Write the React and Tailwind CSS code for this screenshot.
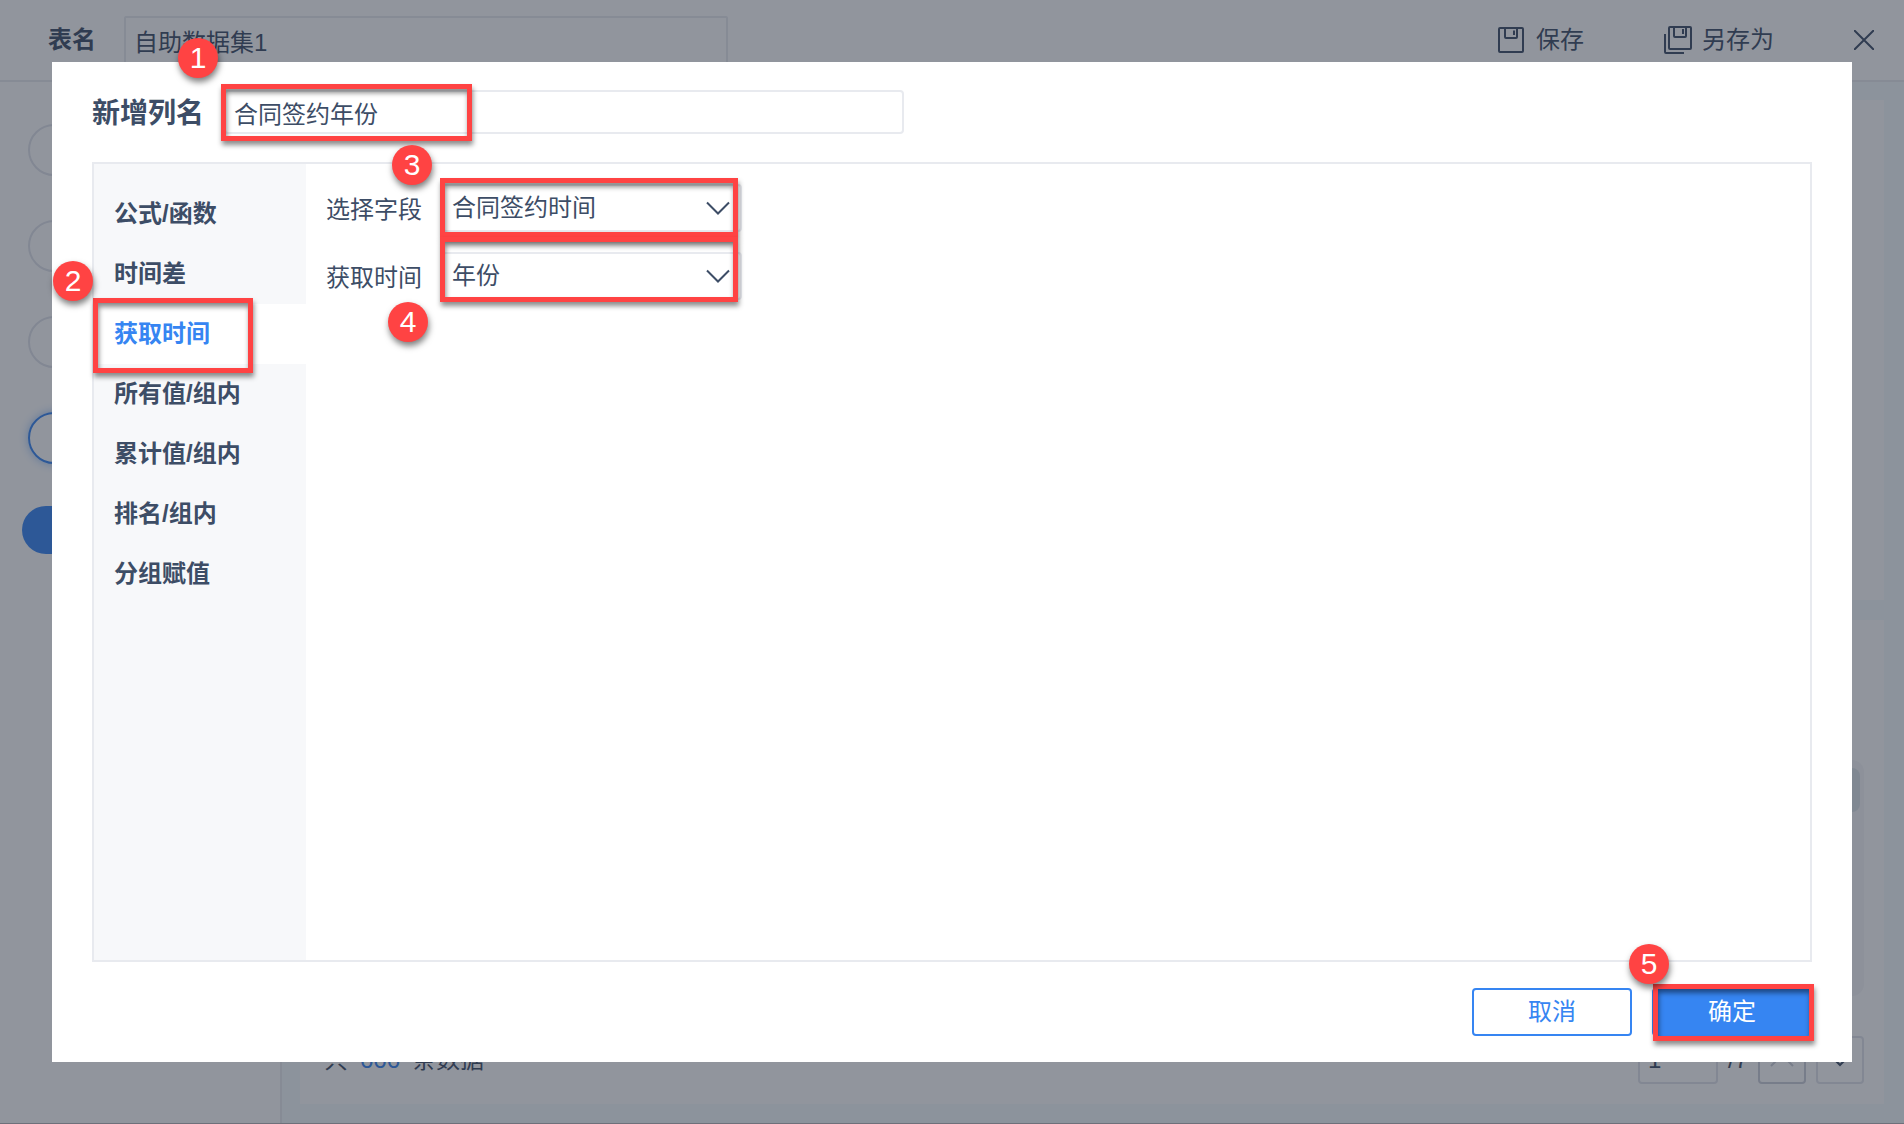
import React from "react";

const navItems = ["公式/函数", "时间差", "获取时间", "所有值/组内", "累计值/组内", "排名/组内", "分组赋值"];

function SaveIcon() {
  return (
    <svg width="26" height="26" viewBox="0 0 26 26" fill="none" stroke="currentColor" strokeWidth="2" aria-hidden="true">
      <rect x="1" y="1" width="24" height="24" rx="1" />
      <path d="M7 1v9q0 1 1 1h10q1 0 1-1V1M16 3.500v4.500" />
    </svg>
  );
}

function SaveAsIcon() {
  return (
    <svg width="28" height="28" viewBox="0 0 28 28" fill="none" stroke="currentColor" strokeWidth="2" aria-hidden="true">
      <rect x="5" y="1" width="22" height="22" rx="1" />
      <path d="M10 1v9q0 1 1 1h10q1 0 1-1V1M19 3v5M1 8v18q0 1 1 1h18" />
    </svg>
  );
}

function Callout({ n, className }) {
  return (
    <span
      className={
        "pointer-events-none absolute z-20 flex size-10 items-center justify-center rounded-full bg-[#ff4343] text-[30px] leading-10 text-white shadow-[1px_4px_6px_rgba(0,0,0,0.5)] " +
        className
      }
    >
      {n}
    </span>
  );
}

function Marker({ className }) {
  return (
    <span
      className={
        "pointer-events-none absolute z-10 border-5 border-[#ff4343] shadow-[1px_4px_5px_rgba(0,0,0,0.45),inset_1px_4px_5px_rgba(0,0,0,0.45)] " +
        className
      }
    />
  );
}

function Field({ id, label, options, children }) {
  return (
    <div className="flex items-center gap-5">
      <label htmlFor={id} className="pt-1">
        {label}
      </label>
      <div className="relative w-[300px]">
        <select
          id={id}
          className="h-12 w-full appearance-none rounded border-2 border-[#e8eaef] bg-white px-2 text-[#3d4d66]"
        >
          {options.map((o) => (
            <option key={o}>{o}</option>
          ))}
        </select>
        <svg
          className="pointer-events-none absolute top-4 right-3"
          width="24"
          height="16"
          viewBox="0 0 24 16"
          fill="none"
          stroke="#3d4d66"
          strokeWidth="2"
          aria-hidden="true"
        >
          <path d="M1 2.500l11 11 11-11" />
        </svg>
        {children}
      </div>
    </div>
  );
}

function Backdrop() {
  return (
    <div className="flex h-full flex-col bg-white">
      <header className="flex h-[82px] shrink-0 items-start border-b-2 border-[#e8eaef] pt-4 pr-[30px] pl-12">
        <label htmlFor="table-name" className="pt-1.5 leading-9 font-bold">
          表名
        </label>
        <input
          id="table-name"
          defaultValue="自助数据集1"
          className="ml-7 h-12 w-[604px] rounded-xs border-2 border-[#e8eaef] bg-white px-2"
        />
        <div className="ml-auto flex h-12 items-center">
          <button type="button" className="flex items-center gap-3">
            <SaveIcon />
            <span>保存</span>
          </button>
          <button type="button" className="ml-20 flex items-center gap-2.5">
            <SaveAsIcon />
            <span>另存为</span>
          </button>
          <button type="button" aria-label="关闭" className="ml-20">
            <svg width="20" height="20" viewBox="0 0 20 20" fill="none" stroke="currentColor" strokeWidth="2" aria-hidden="true">
              <path d="M0 0l20 20M20 0L0 20" />
            </svg>
          </button>
        </div>
      </header>
      <div className="flex min-h-0 flex-1">
        <aside className="flex w-[282px] shrink-0 flex-col border-r-2 border-[#e8eaef] px-[22px] pt-[42px]">
          <div className="flex flex-col gap-11 px-1.5">
            <div className="h-[52px] rounded-full border-2 border-[#e0e3ea]" />
            <div className="h-[52px] rounded-full border-2 border-[#e0e3ea]" />
            <div className="h-[52px] rounded-full border-2 border-[#e0e3ea]" />
            <div className="h-[52px] rounded-full border-2 border-[#3685f2] shadow-[0_0_10px_#3685f280]" />
          </div>
          <div className="mt-[42px] h-12 rounded-full bg-[#3685f2]" />
        </aside>
        <main className="flex flex-1 flex-col gap-5 bg-[#f5fbfd] pt-[18px] pr-5 pb-[19px] pl-[18px]">
          <section className="basis-[500px] bg-white" />
          <section className="flex flex-1 flex-col justify-end bg-white pr-5 pb-5 pl-6">
            <div className="mb-10 flex h-[236px] justify-end rounded-xl bg-[#f6f6f8] px-1 py-2">
              <div className="h-11 w-4 rounded-lg bg-[#dde4e8]" />
            </div>
            <footer className="flex h-12 items-center justify-between">
              <p className="flex gap-3">
                共 <span className="text-[#3685f2]">666</span> 条数据
              </p>
              <div className="flex items-center gap-2.5">
                <input
                  aria-label="页码"
                  defaultValue="1"
                  className="h-12 w-20 rounded border-2 border-[#e0e3ea] bg-white px-2"
                />
                <span className="w-5">/7</span>
                <button type="button" aria-label="上一页" className="flex size-12 items-center justify-center rounded border-2 border-[#cbced8]">
                  <svg width="24" height="14" viewBox="0 0 24 14" fill="none" stroke="#cbced8" strokeWidth="2" aria-hidden="true">
                    <path d="M1 13L12 2l11 11" />
                  </svg>
                </button>
                <button type="button" aria-label="下一页" className="flex size-12 items-center justify-center rounded border-2 border-[#e0e3ea]">
                  <svg width="24" height="14" viewBox="0 0 24 14" fill="none" stroke="currentColor" strokeWidth="2" aria-hidden="true">
                    <path d="M1 1l11 11L23 1" />
                  </svg>
                </button>
              </div>
            </footer>
          </section>
        </main>
      </div>
      <div className="h-px bg-[#b9b5b8]" />
    </div>
  );
}

export default function App() {
  return (
    <div className="relative h-screen overflow-hidden text-2xl leading-9 text-[#3d4d66] [font-family:'Liberation_Sans','Noto_Sans_CJK_SC',sans-serif]">
      <Backdrop />
      <div className="absolute inset-0 flex bg-[#232b3b]/50 px-[52px] py-[62px]">
        <div role="dialog" aria-labelledby="column-label" className="relative flex flex-1 flex-col bg-white px-10 pt-7 pb-[26px]">
          <Callout n="1" className="-top-6 left-[126px]" />
          <div className="flex items-center gap-5">
            <label id="column-label" htmlFor="column-name" className="pt-1 text-[28px] font-bold">
              新增列名
            </label>
            <div className="relative w-[680px]">
              <input
                id="column-name"
                defaultValue="合同签约年份"
                className="block h-11 w-full rounded border-2 border-[#e8eaef] bg-white px-2"
              />
              <Marker className="-top-1.5 -left-[3px] h-[57px] w-[251px]" />
            </div>
          </div>

          <div className="relative mt-7 flex flex-1 border-2 border-[#e8eaef]">
            <nav className="w-[212px] bg-[#f7f8fa] pt-5">
              {navItems.map((item) => {
                const active = item === "获取时间";
                return (
                  <div key={item} className="relative">
                    <button
                      type="button"
                      className={
                        active
                          ? "block h-15 w-full bg-white px-5 text-left font-bold text-[#3685f2]"
                          : "block h-15 w-full px-5 text-left font-bold"
                      }
                    >
                      {item}
                    </button>
                    {active && <Marker className="-top-1.5 -left-px h-[75px] w-40" />}
                    {active && <Callout n="2" className="-top-[43px] -left-[41px]" />}
                  </div>
                );
              })}
            </nav>
            <div className="flex flex-1 flex-col gap-5 p-5">
              <Field id="field" label="选择字段" options={["合同签约时间"]}>
                <Marker className="-top-1.5 -left-0.5 h-[59px] w-[298px]" />
                <Callout n="3" className="-top-[39px] -left-[50px]" />
              </Field>
              <Field id="time" label="获取时间" options={["年份"]}>
                <Marker className="-top-[15px] -left-0.5 h-[65px] w-[298px]" />
                <Callout n="4" className="top-[50px] -left-[54px]" />
              </Field>
            </div>
          </div>

          <div className="mt-[26px] flex justify-end gap-5">
            <button type="button" className="h-12 w-40 rounded border-2 border-[#3685f2] bg-white text-[#3685f2]">
              取消
            </button>
            <div className="relative">
              <button type="button" className="block h-12 w-40 rounded bg-[#3685f2] text-white">
                确定
              </button>
              <Marker className="-top-1 left-px h-[57px] w-[161px]" />
              <Callout n="5" className="-top-11 -left-[23px]" />
            </div>
          </div>
        </div>
      </div>
    </div>
  );
}
